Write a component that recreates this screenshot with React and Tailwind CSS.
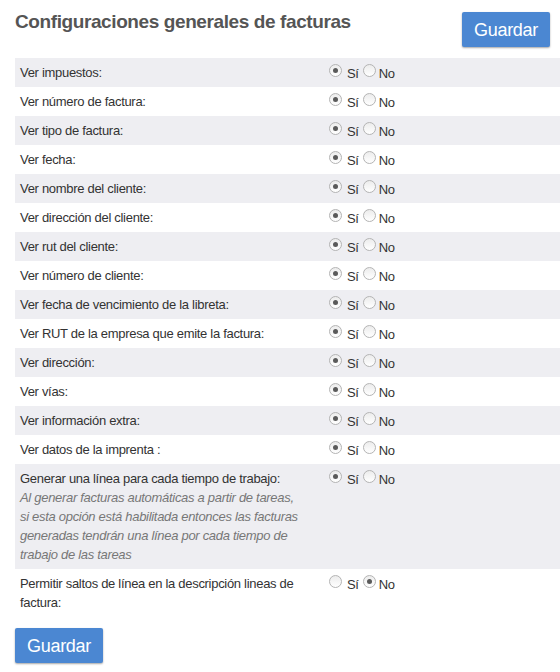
import React from "react";

const rows = [
  { label: "Ver impuestos:", yes: true },
  { label: "Ver número de factura:", yes: true },
  { label: "Ver tipo de factura:", yes: true },
  { label: "Ver fecha:", yes: true },
  { label: "Ver nombre del cliente:", yes: true },
  { label: "Ver dirección del cliente:", yes: true },
  { label: "Ver rut del cliente:", yes: true },
  { label: "Ver número de cliente:", yes: true },
  { label: "Ver fecha de vencimiento de la libreta:", yes: true },
  { label: "Ver RUT de la empresa que emite la factura:", yes: true },
  { label: "Ver dirección:", yes: true },
  { label: "Ver vías:", yes: true },
  { label: "Ver información extra:", yes: true },
  { label: "Ver datos de la imprenta :", yes: true },
  {
    label: "Generar una línea para cada tiempo de trabajo:",
    yes: true,
    desc: "Al generar facturas automáticas a partir de tareas, si esta opción está habilitada entonces las facturas generadas tendrán una línea por cada tiempo de trabajo de las tareas",
  },
  { label: "Permitir saltos de línea en la descripción lineas de factura:", yes: false },
];

function Radio({ checked }) {
  return (
    <span className="mt-[1px] flex h-[13px] w-[13px] shrink-0 items-center justify-center rounded-full border border-[#b4b4b4] bg-[linear-gradient(#ececec,#ffffff)]">
      {checked && <span className="h-[5px] w-[5px] rounded-full bg-[#5a5a5a]" />}
    </span>
  );
}

function Button() {
  return (
    <button className="h-[35px] w-[88px] rounded-[2px] bg-[#4b87d2] text-[18px] leading-none text-white shadow-[0_1px_2px_rgba(0,0,0,0.35)]">
      Guardar
    </button>
  );
}

export default function App() {
  return (
    <div className="min-h-[672px] bg-white pl-[15px] font-['Liberation_Sans',Arial,sans-serif] text-[13px] leading-[19px] tracking-[-0.3px] text-[#333]">
      <div className="flex items-start justify-between pr-[10px] pt-[12px]">
        <h2 className="mt-[-2px] text-[19px] font-bold leading-[24px] tracking-[-0.4px] text-[#555]">
          Configuraciones generales de facturas
        </h2>
        <Button />
      </div>
      <div className="mt-[11px] flex flex-col">
        {rows.map((r, i) => (
          <div key={i} className={`flex ${i % 2 === 0 ? "bg-[#eeeef2]" : "bg-white"}`}>
            <div className="w-[310px] shrink-0 py-[5px] pl-[5px] pr-[22px]">
              <div>{r.label}</div>
              {r.desc && <div className="italic text-[#777]">{r.desc}</div>}
            </div>
            <div className="mt-[5px] flex h-[19px] items-start pl-[4px]">
              <Radio checked={r.yes} />
              <span className="ml-[5px] mt-[2px] leading-[17px]">Sí</span>
              <span className="ml-[4px]" />
              <Radio checked={!r.yes} />
              <span className="ml-[3px] mt-[2px] leading-[17px]">No</span>
            </div>
          </div>
        ))}
      </div>
      <div className="mt-[11px]">
        <Button />
      </div>
    </div>
  );
}
